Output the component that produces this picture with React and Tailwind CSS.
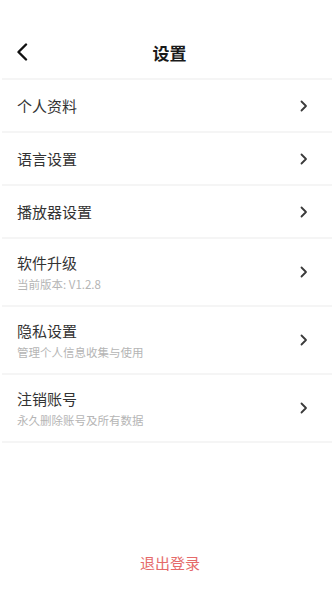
import React from "react";

const rows = [
  { title: "个人资料" },
  { title: "语言设置" },
  { title: "播放器设置" },
  { title: "软件升级", sub: "当前版本: V1.2.8" },
  { title: "隐私设置", sub: "管理个人信息收集与使用" },
  { title: "注销账号", sub: "永久删除账号及所有数据" },
];

function Chevron() {
  return (
    <svg width="8" height="12" viewBox="0 0 8 12" fill="none">
      <path d="M1.5 1.5L6 6L1.5 10.5" stroke="#3a3a3a" strokeWidth="1.8" strokeLinecap="round" strokeLinejoin="round" />
    </svg>
  );
}

function Divider() {
  return <div className="mx-[2px] h-[2px] bg-[#f5f5f5]" />;
}

export default function App() {
  return (
    <div
      className="flex min-h-[600px] w-[334px] flex-col bg-white"
      style={{ fontFamily: '"Noto Sans CJK SC", "Noto Sans", sans-serif' }}
    >
      <div className="relative flex h-[78px] items-center justify-center">
        <div className="absolute left-[16px] top-[43px]">
          <svg width="13" height="18" viewBox="0 0 13 18" fill="none">
            <path d="M10 1.5L2.5 9L10 16.5" stroke="#111" strokeWidth="2.4" strokeLinecap="round" strokeLinejoin="round" />
          </svg>
        </div>
        <div className="ml-[5px] mt-[28px] text-[17px] font-bold leading-[24px] text-[#1a1a1a]">设置</div>
      </div>
      <Divider />
      {rows.map((r) => (
        <React.Fragment key={r.title}>
          <div className={`flex items-center justify-between pl-[17px] pr-[26px] ${r.sub ? "h-[66px]" : "h-[51px]"}`}>
            <div className="flex flex-col">
              <div className="text-[15px] leading-[20px] text-[#333]">{r.title}</div>
              {r.sub && (
                <div className="mt-[3px] text-[11.5px] leading-[16px] text-[#b5b5b5]">{r.sub}</div>
              )}
            </div>
            <Chevron />
          </div>
          <Divider />
        </React.Fragment>
      ))}
      <div className="flex-1" />
      <div className="ml-[6px] pb-[27px] text-center text-[15px] leading-[20px] text-[#e56a6a]">退出登录</div>
    </div>
  );
}
